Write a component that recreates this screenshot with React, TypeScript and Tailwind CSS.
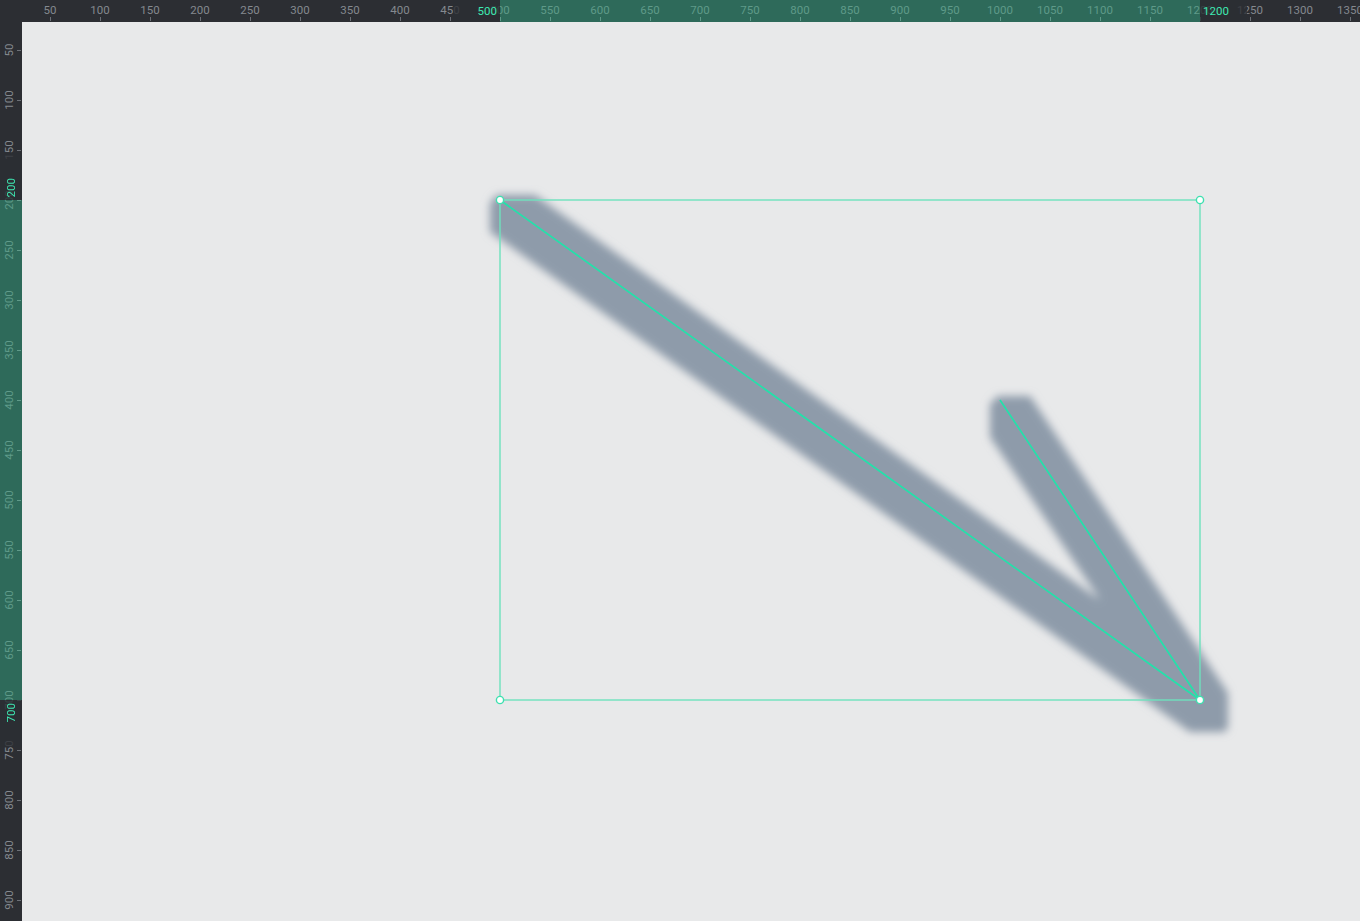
import React from "react";

const TOP_MARKS = Array.from({ length: 27 }, (_, i) => (i + 1) * 50);
const LEFT_MARKS = Array.from({ length: 18 }, (_, i) => (i + 1) * 50);

// selection bounds in page coords
const SEL = { x1: 500, y1: 200, x2: 1200, y2: 700 };

const inSelX = (v: number) => v >= SEL.x1 && v <= SEL.x2;
const inSelY = (v: number) => v >= SEL.y1 && v <= SEL.y2;

function TopRuler() {
  return (
    <div className="relative h-[22px] overflow-hidden bg-[#2c2e33]">
      <div
        className="absolute top-0 h-full bg-[#2e6a5a]"
        style={{ left: SEL.x1 - 22, width: SEL.x2 - SEL.x1 }}
      />
      {TOP_MARKS.map((v) => (
        <div key={v} className="absolute top-0 h-full" style={{ left: v - 22 }}>
          <span
            className={`absolute top-[3px] -translate-x-1/2 whitespace-nowrap text-[11.5px] leading-[15px] ${
              inSelX(v) ? "text-[#5f9a89]" : "text-[#84898f]"
            }`}
          >
            {v}
          </span>
          <div className={`absolute top-[17px] h-[4px] w-px ${inSelX(v) ? "bg-[#5f9a89]" : "bg-[#6c7077]"}`} />
        </div>
      ))}
      <div
        className="absolute top-0 flex h-full w-[47px] items-center justify-end bg-[#2c2e33]/80 pr-[3px]"
        style={{ left: SEL.x1 - 22 - 47 }}
      >
        <span className="text-[11.5px] leading-[15px] text-[#3ee8b2]">{SEL.x1}</span>
      </div>
      <div
        className="absolute top-0 flex h-full w-[47px] items-center justify-start bg-[#2c2e33]/80 pl-[3px]"
        style={{ left: SEL.x2 - 22 }}
      >
        <span className="text-[11.5px] leading-[15px] text-[#3ee8b2]">{SEL.x2}</span>
      </div>
    </div>
  );
}

function LeftRuler() {
  return (
    <div className="relative w-[22px] overflow-hidden bg-[#2c2e33]">
      <div
        className="absolute left-0 w-full bg-[#2e6a5a]"
        style={{ top: SEL.y1 - 22, height: SEL.y2 - SEL.y1 }}
      />
      {LEFT_MARKS.map((v) => (
        <div key={v} className="absolute left-0 w-full" style={{ top: v - 22 }}>
          <span
            className={`absolute left-[2px] -translate-y-1/2 rotate-180 whitespace-nowrap text-[11.5px] leading-[15px] [writing-mode:vertical-rl] ${
              inSelY(v) ? "text-[#5f9a89]" : "text-[#84898f]"
            }`}
          >
            {v}
          </span>
          <div className={`absolute left-[17px] h-px w-[4px] ${inSelY(v) ? "bg-[#5f9a89]" : "bg-[#6c7077]"}`} />
        </div>
      ))}
      <div
        className="absolute left-0 flex h-[47px] w-full flex-col items-center justify-end bg-[#2c2e33]/80 pb-[3px]"
        style={{ top: SEL.y1 - 22 - 47 }}
      >
        <span className="rotate-180 text-[11.5px] leading-[15px] text-[#3ee8b2] [writing-mode:vertical-rl]">{SEL.y1}</span>
      </div>
      <div
        className="absolute left-0 flex h-[47px] w-full flex-col items-center justify-start bg-[#2c2e33]/80 pt-[3px]"
        style={{ top: SEL.y2 - 22 }}
      >
        <span className="rotate-180 text-[11.5px] leading-[15px] text-[#3ee8b2] [writing-mode:vertical-rl]">{SEL.y2}</span>
      </div>
    </div>
  );
}

function Canvas() {
  const handles = [
    [SEL.x1, SEL.y1],
    [SEL.x2, SEL.y1],
    [SEL.x1, SEL.y2],
    [SEL.x2, SEL.y2],
  ];
  return (
    <div className="relative overflow-hidden bg-[#e8e9ea]">
      <svg className="block h-full w-full" viewBox="22 22 1338 899" preserveAspectRatio="xMinYMin slice">
        <defs>
          <filter id="soft" x="-20%" y="-20%" width="140%" height="140%">
            <feGaussianBlur stdDeviation="4.5" />
          </filter>
        </defs>
        {/* blurred arrow body */}
        <polygon
          filter="url(#soft)"
          fill="#8e9baa"
          points="497,195 535,195 1100,600 990,437 990,404 998,396 1030,396 1228,693 1228,728 1224,732 1190,732 490,232 490,203"
        />
        <rect
          x={SEL.x1}
          y={SEL.y1}
          width={SEL.x2 - SEL.x1}
          height={SEL.y2 - SEL.y1}
          fill="none"
          stroke="#6ee2bd"
          strokeWidth="1.4"
        />
        <polyline
          points="500,200 1200,700 1000,400"
          fill="none"
          stroke="#22e2aa"
          strokeWidth="1.7"
          strokeLinejoin="round"
        />
        {handles.map(([x, y]) => (
          <circle key={`${x}-${y}`} cx={x} cy={y} r="3.6" fill="#ffffff" stroke="#3fe0b0" strokeWidth="1.4" />
        ))}
      </svg>
    </div>
  );
}

export default function App() {
  return (
    <div
      className="grid h-[921px] w-[1360px] grid-cols-[22px_1fr] grid-rows-[22px_1fr] overflow-hidden bg-[#2c2e33]"
      style={{ fontFamily: "Roboto, 'Liberation Sans', sans-serif" }}
    >
      <div className="bg-[#2c2e33]" />
      <TopRuler />
      <LeftRuler />
      <Canvas />
    </div>
  );
}
